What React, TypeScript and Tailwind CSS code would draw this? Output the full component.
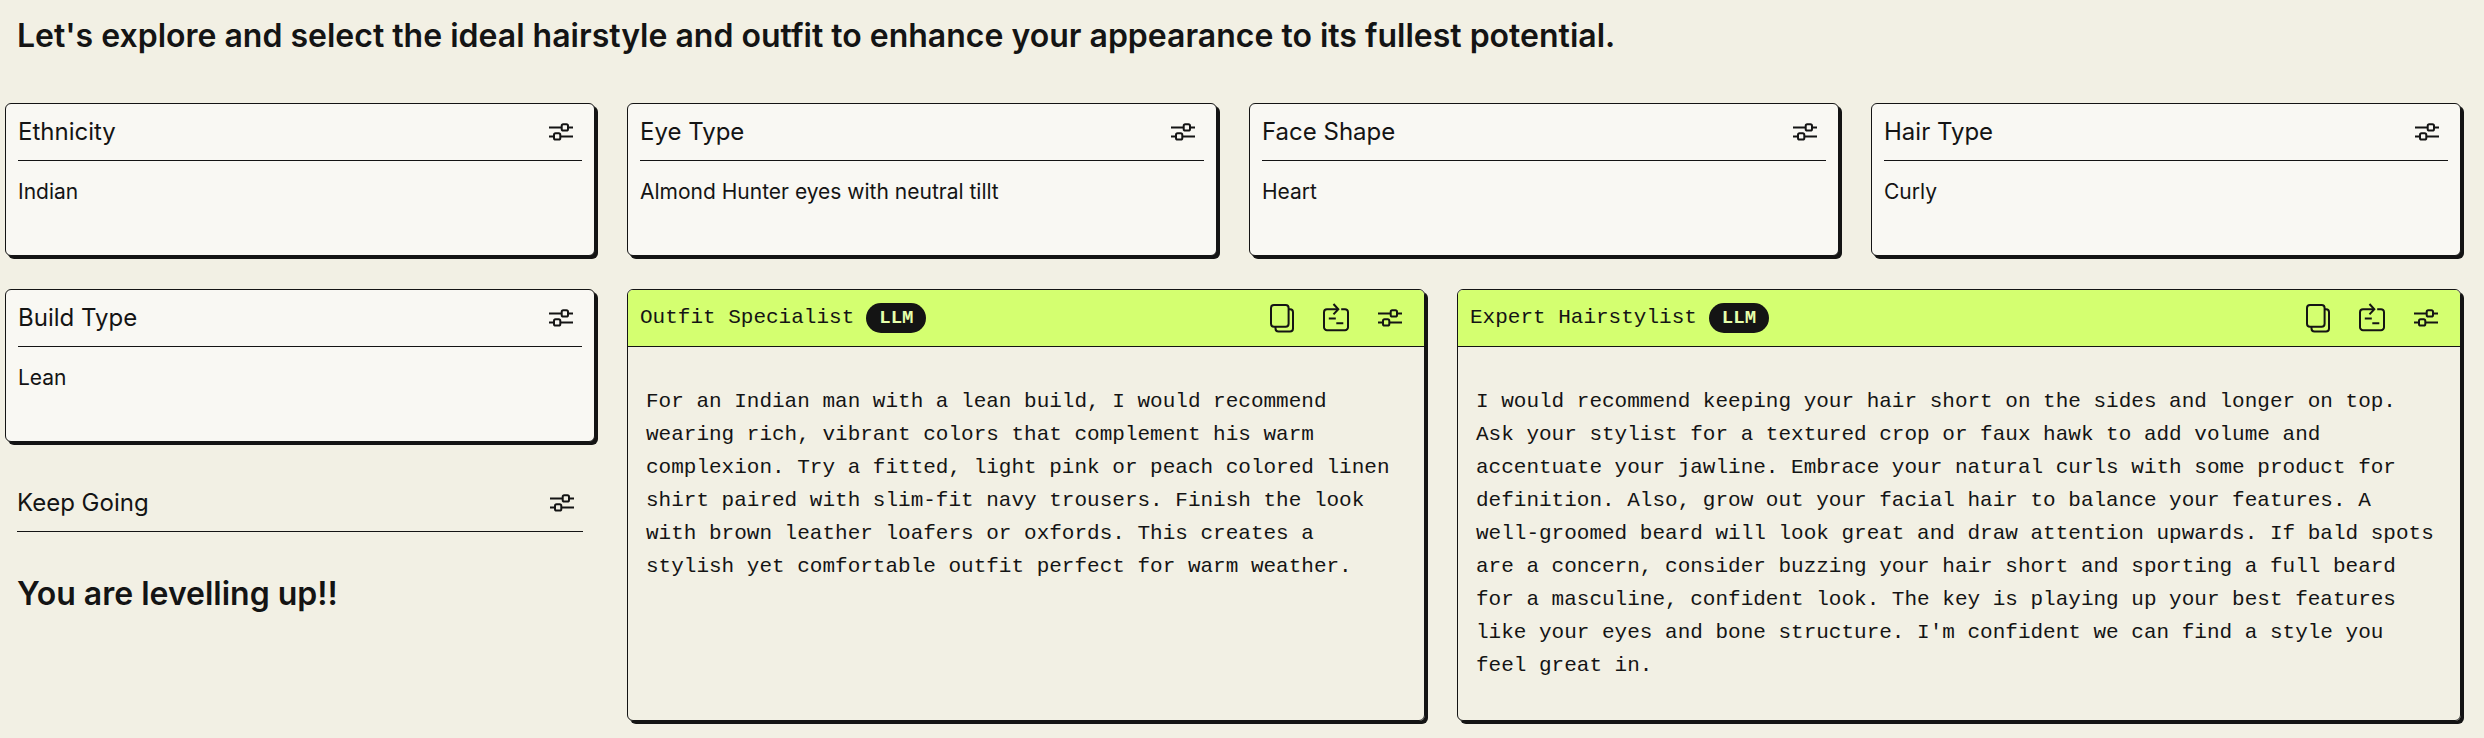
import type { ReactNode } from 'react';

const SANS = "font-['Inter','Liberation_Sans',sans-serif]";
const MONO = "font-['Liberation_Mono',monospace]";

interface TraitProps {
  title: string;
  value: string;
}

interface AssistantProps {
  title: string;
  children: ReactNode;
}

const traits: TraitProps[] = [
  { title: 'Ethnicity', value: 'Indian' },
  { title: 'Eye Type', value: 'Almond Hunter eyes with neutral tillt' },
  { title: 'Face Shape', value: 'Heart' },
  { title: 'Hair Type', value: 'Curly' },
];

function SlidersIcon() {
  return (
    <svg width="24" height="18" viewBox="0 0 24 18" fill="none" stroke="currentColor" strokeWidth="2">
      <path d="M0 4.4h12.7M19 4.4h5M0 13.4h5M11.3 13.4H24" />
      <rect x="12.7" y="1.2" width="6.3" height="6.3" rx="1.6" />
      <rect x="5" y="10.3" width="6.3" height="6.3" rx="1.6" />
    </svg>
  );
}

function CopyIcon() {
  return (
    <svg width="24" height="29" viewBox="0 0 24 29" fill="none" stroke="currentColor" strokeWidth="2">
      <rect x="1" y="1" width="17.6" height="21.8" rx="3" />
      <path d="M18.6 5.2h1.4a3 3 0 0 1 3 3v16.4a3 3 0 0 1-3 3H8.500a3 3 0 0 1-3-3v-1.800" />
    </svg>
  );
}

function RunIcon() {
  return (
    <svg width="26" height="30" viewBox="0 0 26 30" fill="none" stroke="currentColor" strokeWidth="2">
      <path d="M14.5 6.2H4a3 3 0 0 0-3 3v15a3 3 0 0 0 3 3h18a3 3 0 0 0 3-3v-15a3 3 0 0 0-3-3h-3.800" />
      <path d="M10.5 1l4.800 5.200-4.800 5.200M5.800 15.500h7M13.300 20.200h7" />
    </svg>
  );
}

function IconButton({ label, children }: { label: string; children: ReactNode }) {
  return (
    <button type="button" aria-label={label} className="flex cursor-pointer items-center justify-center">
      {children}
    </button>
  );
}

function CardHeader({ title }: { title: string }) {
  return (
    <div className="flex h-[57px] items-center justify-between border-b border-[#141414] pr-[9px]">
      <h2 className="text-2xl leading-8">{title}</h2>
      <IconButton label={`${title} settings`}>
        <SlidersIcon />
      </IconButton>
    </div>
  );
}

function TraitCard({ title, value }: TraitProps) {
  return (
    <section className="h-[153px] rounded-md border border-[#141414] bg-[#f9f8f3] px-3 shadow-[3px_3px_0_#141414]">
      <CardHeader title={title} />
      <p className="pt-[15px] text-[21px] leading-8">{value}</p>
    </section>
  );
}

function AssistantCard({ title, children }: AssistantProps) {
  return (
    <section className={`${MONO} overflow-hidden rounded-md border border-[#141414] shadow-[3px_3px_0_#141414]`}>
      <header className="flex h-[57px] items-center justify-between border-b border-[#141414] bg-[#d4ff70] pr-[22px] pl-3">
        <div className="flex items-center gap-3">
          <h2 className="text-[21px] leading-8">{title}</h2>
          <span className="rounded-full bg-[#141414] px-[13px] text-[19px] leading-[30px] font-bold text-[#e6ffab]">
            LLM
          </span>
        </div>
        <div className="flex items-center gap-[29px]">
          <IconButton label={`Copy ${title}`}>
            <CopyIcon />
          </IconButton>
          <IconButton label={`Run ${title}`}>
            <RunIcon />
          </IconButton>
          <IconButton label={`${title} settings`}>
            <SlidersIcon />
          </IconButton>
        </div>
      </header>
      <p className="px-[18px] py-[38px] text-[21px] leading-[33px]">{children}</p>
    </section>
  );
}

export default function App() {
  return (
    <main className={`${SANS} min-h-screen bg-[#f2f0e4] pr-[23px] pb-4 pl-[5px] text-[#141414]`}>
      <h1 className="px-3 pt-4 pb-[47px] text-[32px] leading-10 font-semibold">
        Let's explore and select the ideal hairstyle and outfit to enhance your appearance to its fullest potential.
      </h1>

      <div className="grid grid-cols-4 gap-x-8 gap-y-[33px]">
        {traits.map((trait) => (
          <TraitCard key={trait.title} {...trait} />
        ))}

        <div className="flex flex-col gap-[33px]">
          <TraitCard title="Build Type" value="Lean" />
          <section className="px-3">
            <CardHeader title="Keep Going" />
            <p className="pt-[42px] text-[32px] leading-10 font-semibold">You are levelling up!!</p>
          </section>
        </div>

        <div className="col-span-3 grid min-h-[432px] grid-cols-[798fr_1004fr] gap-x-8">
          <AssistantCard title="Outfit Specialist">
            For an Indian man with a lean build, I would recommend wearing rich, vibrant colors that complement his warm
            complexion. Try a fitted, light pink or peach colored linen shirt paired with slim-fit navy trousers. Finish
            the look with brown leather loafers or oxfords. This creates a stylish yet comfortable outfit perfect for
            warm weather.
          </AssistantCard>
          <AssistantCard title="Expert Hairstylist">
            I would recommend keeping your hair short on the sides and longer on top. Ask your stylist for a textured
            crop or faux hawk to add volume and accentuate your jawline. Embrace your natural curls with some product
            for definition. Also, grow out your facial hair to balance your features. A well-groomed beard will look
            great and draw attention upwards. If bald spots are a concern, consider buzzing your hair short and sporting
            a full beard for a masculine, confident look. The key is playing up your best features like your eyes and
            bone structure. I'm confident we can find a style you feel great in.
          </AssistantCard>
        </div>
      </div>
    </main>
  );
}
